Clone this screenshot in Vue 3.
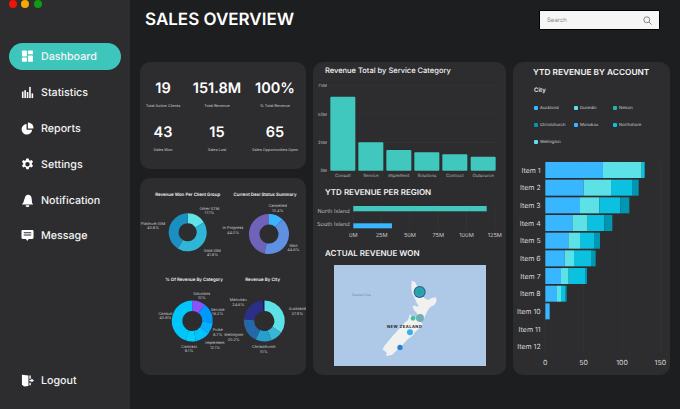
<script setup>
const nav = [
  { key: 'dash', label: 'Dashboard', active: true },
  { key: 'stats', label: 'Statistics' },
  { key: 'reports', label: 'Reports' },
  { key: 'settings', label: 'Settings' },
  { key: 'bell', label: 'Notification' },
  { key: 'msg', label: 'Message' }
]
const stats = [
  ['19', 'Total Active Clients'], ['151.8M', 'Total Revenue'], ['100%', '% Total Revenue'],
  ['43', 'Sales Won'], ['15', 'Sales Lost'], ['65', 'Sales Opportunities Open']
]
function arc(cx, cy, r0, r1, a0, a1) {
  const p = (r, a) => {
    const t = ((a - 90) * Math.PI) / 180
    return `${(cx + r * Math.cos(t)).toFixed(2)} ${(cy + r * Math.sin(t)).toFixed(2)}`
  }
  const large = a1 - a0 > 180 ? 1 : 0
  return `M${p(r1, a0)}A${r1} ${r1} 0 ${large} 1 ${p(r1, a1)}L${p(r0, a1)}A${r0} ${r0} 0 ${large} 0 ${p(r0, a0)}Z`
}
function donut(cx, cy, r0, r1, segs) {
  return segs.map(([a0, a1, fill]) => ({ d: arc(cx, cy, r0, r1, a0, a1), fill }))
}
const donuts = [
  ...donut(187.7, 232.3, 9, 19, [[0, 58, '#62e3e6'], [58, 212, '#2fb6d6'], [212, 360, '#1b8fc2']]),
  ...donut(269, 234, 9.5, 20, [[0, 42, '#38b6ff'], [42, 194, '#5f90e2'], [194, 360, '#6f62b9']]),
  ...donut(192.3, 321, 10, 20.5, [[0, 38, '#8c52ff'], [38, 95, '#0097ff'], [95, 127, '#06b0ff'], [127, 170, '#00c2ff'], [170, 200, '#00d0ff'], [200, 360, '#00c6fb']]),
  ...donut(264.3, 321, 10, 20.5, [[0, 125, '#5ce1e6'], [125, 160, '#38b6d8'], [160, 205, '#259fcc'], [205, 275, '#2468a8'], [275, 355, '#2b2f86'], [355, 360, '#1c1a5e']])
]
const z = (x, y) => [135 + x / 3, 175 + y / 3]
const dTitles = [
  [158, 59, 'Revenue Won Per Client Group'], [390, 59, 'Current Deal Status Summary'],
  [177, 313, '% Of Revenue By Category'], [383, 313, 'Revenue By City']
].map(([x, y, t]) => ({ p: z(x, y), t }))
const dLabels = [
  [223, 100, 'Other STM'], [223, 113, '17.1%'], [54, 144, 'Platinum IGM'], [54, 157, '40.8%'],
  [232, 225, 'Gold IGM'], [232, 238, '41.8%'], [428, 91, 'Cancelled'], [428, 105, '10.4%'],
  [294, 158, 'In Progress'], [294, 171, '44.0%'], [475, 210, 'Won'], [475, 224, '44.6%'],
  [200, 355, 'Solutions'], [200, 368, '10%'], [248, 402, 'Service'], [248, 416, '16.2%'],
  [248, 464, 'Pulse'], [248, 478, '8.7%'], [240, 502, 'Implement'], [240, 516, '12.1%'],
  [162, 513, 'Contract'], [162, 527, '8.1%'], [91, 414, 'Consult'], [91, 428, '40.8%'],
  [310, 373, 'Manukau'], [310, 387, '24.6%'], [487, 401, 'Auckland'], [487, 415, '37.9%'],
  [296, 478, 'Wellington'], [296, 492, '20.2%'], [386, 514, 'Christchurch'], [386, 528, '10%']
].map(([x, y, t]) => ({ p: z(x, y), t }))

const svc = [['Consult', 125, 61], ['Service', 262, 145], ['Implement', 285, 229], ['Solutions', 292, 313], ['Contract', 298, 397], ['Outsource', 305, 482]]
  .map(([t, top, x]) => ({ t, x: 310 + x / 3, y: 55 + top / 3, h: (347 - top) / 3 }))
const svcGrid = [['75M', 85.7], ['50M', 114], ['25M', 142.3], ['0M', 170.7]]
const regTicks = ['0M', '25M', '50M', '75M', '100M', '125M'].map((t, i) => ({ t, x: 353.3 + i * 28.3 }))

const legend = [
  ['Auckland', '#38b6ff'], ['Dunedin', '#5ce1e6'], ['Nelson', '#1fb8a8'],
  ['Christchurch', '#0097b2'], ['Manukau', '#38b6ff'], ['Northshore', '#0cc0df'], ['Wellington', '#5ce1e6']
]
const colors = ['#38b6ff', '#5ce1e6', '#0cc0df', '#0097b2']
const accounts = [
  ['Item 1', [279, 395, 404]], ['Item 2', [221, 303, 366, 386]], ['Item 3', [210, 268, 331, 358]],
  ['Item 4', [187, 233, 283, 307]], ['Item 5', [175, 210, 252, 270]], ['Item 6', [164, 192, 243, 257]],
  ['Item 7', [153, 176, 225, 231]], ['Item 8', [141, 153, 167, 170]], ['Item 10', [119]], ['Item 11', []], ['Item 12', []]
].map(([t, ends], i) => {
  const y = 163 + i * 17.67
  let prev = 106
  const segs = ends.map((e, k) => {
    const s = { x: 510 + prev / 3, w: (e - prev) / 3, fill: colors[k] }
    prev = e
    return s
  })
  return { t, y, segs }
})
const accTicks = [0, 50, 100, 150].map(v => ({ v, x: 510 + (106 + v * 2.3) / 3 }))
</script>

<template>
  <div class="app">
    <aside class="side">
      <div class="lights"><i class="red"></i><i class="amber"></i><i class="green"></i></div>
      <nav class="nav">
        <a v-for="n in nav" :key="n.key" class="item" :class="{ on: n.active }">
          <svg class="ico" viewBox="0 0 14 14" fill="#fff">
            <template v-if="n.key === 'dash'">
              <rect x="1" y="0.5" width="5.4" height="6.4" rx=".8" /><rect x="1" y="8" width="5.4" height="4.6" rx=".8" />
              <rect x="7.5" y="0.5" width="5.4" height="4.2" rx=".8" /><rect x="7.5" y="5.8" width="5.4" height="6.8" rx=".8" />
            </template>
            <template v-else-if="n.key === 'stats'">
              <rect x="1" y="6" width="1.7" height="7" /><rect x="3.6" y="4.5" width="1.7" height="8.5" />
              <rect x="6.2" y="6.5" width="1.7" height="6.5" /><rect x="8.8" y="1" width="1.7" height="12" />
              <rect x="11.4" y="8" width="1.7" height="5" />
            </template>
            <template v-else-if="n.key === 'reports'">
              <path d="M6 2.2A5.7 5.7 0 1 0 12 8.4H6Z" /><path d="M7.4.6A5.8 5.8 0 0 1 13.4 7H7.4Z" />
            </template>
            <template v-else-if="n.key === 'settings'">
              <path fill-rule="evenodd" d="M5.7.5h2.6l.4 1.8 1.2.6 1.7-.8 1.4 2.2-1.3 1.2v1.4l1.3 1.2-1.4 2.2-1.7-.8-1.2.6-.4 1.9H5.7l-.4-1.9-1.2-.6-1.7.8L1 8.1l1.3-1.2V5.5L1 4.3l1.4-2.2 1.7.8 1.2-.6ZM7 4.3a2.4 2.4 0 1 0 0 4.8 2.4 2.4 0 0 0 0-4.8Z" />
            </template>
            <template v-else-if="n.key === 'bell'">
              <path d="M8 .8c2.3.3 3.4 2 3.5 4.2l.4 4.4 1.1 1.8H1l1.5-2 1.4-4.4C4.5 2.5 5.8.5 8 .8Z" /><path d="M5 12.1h4a2 2 0 0 1-4 0Z" />
            </template>
            <template v-else-if="n.key === 'msg'">
              <path fill-rule="evenodd" d="M1.8 1h10.4c.7 0 1.3.6 1.3 1.3v7.2c0 .7-.6 1.3-1.3 1.3H8.4L6.6 13 5.4 10.8H1.8c-.7 0-1.3-.6-1.3-1.3V2.300c0-.7.6-1.300 1.300-1.300ZM3 3.600v1h8v-1Zm0 2.400v1h8V6Z" />
            </template>
          </svg>
          <span>{{ n.label }}</span>
        </a>
      </nav>
      <a class="item logout">
        <svg class="ico" viewBox="0 0 14 14" fill="#fff">
          <path d="M1 .8 8 1.500V13L3.500 13.400 1 11.500Z" /><path d="M9 1.500h1.500V5H9ZM9 9.500h1.500V12H9Z" /><path d="M9 6.200h2.200V4.800L14 7l-2.800 2.200V7.800H9Z" />
        </svg>
        <span>Logout</span>
      </a>
    </aside>

    <main class="main">
      <header class="top">
        <h1>SALES OVERVIEW</h1>
        <label class="search">
          <span>Search</span>
          <svg width="9" height="9" viewBox="0 0 10 10" fill="none" stroke="#777" stroke-width="1"><circle cx="4.200" cy="4.200" r="3.300" /><path d="M6.700 6.700 9.500 9.500" /></svg>
        </label>
      </header>

      <div class="cols">
        <div class="col-left">
          <section class="card stat-card">
            <div v-for="s in stats" :key="s[1]" class="stat">
              <b>{{ s[0] }}</b>
              <small>{{ s[1] }}</small>
            </div>
          </section>
          <section class="card donut-card">
            <svg class="fill" viewBox="140 178 166 197">
              <path v-for="(s, i) in donuts" :key="i" :d="s.d" :fill="s.fill" />
              <text v-for="t in dTitles" :key="t.t" :x="t.p[0]" :y="t.p[1] + 1.800" text-anchor="middle" class="d-title">{{ t.t }}</text>
              <text v-for="(t, i) in dLabels" :key="i" :x="t.p[0]" :y="t.p[1] + 1.500" text-anchor="middle" class="d-label">{{ t.t }}</text>
            </svg>
          </section>
        </div>

        <section class="card mid-card">
          <h2 class="soft">Revenue Total by Service Category</h2>
          <svg class="svc" viewBox="313 77 193 105">
            <g v-for="g in svcGrid" :key="g[0]">
              <line x1="328" x2="496" :y1="g[1]" :y2="g[1]" stroke="#3a3a3c" stroke-width=".5" />
              <text x="327" :y="g[1] + 1.700" text-anchor="end" class="tick">{{ g[0] }}</text>
            </g>
            <g v-for="b in svc" :key="b.t">
              <rect :x="b.x" :y="b.y" width="25" :height="b.h" rx="1" fill="#40c8bf" />
              <text :x="b.x + 12.500" y="177" text-anchor="middle" class="tick">{{ b.t }}</text>
            </g>
          </svg>
          <h2 class="second">YTD REVENUE PER REGION</h2>
          <svg class="reg" viewBox="313 200 193 40">
            <line v-for="t in regTicks" :key="t.t" :x1="t.x" :x2="t.x" y1="204" y2="230" stroke="#3a3a3c" stroke-width=".5" />
            <rect x="353.300" y="206" width="133.400" height="5.300" fill="#40c8bf" />
            <rect x="353.300" y="223.300" width="38.700" height="5" fill="#38b6ff" />
            <text x="349.700" y="213" text-anchor="end" class="reg-l">North Island</text>
            <text x="349.700" y="226" text-anchor="end" class="reg-l">South Island</text>
            <text v-for="t in regTicks" :key="t.t + 'l'" :x="t.x" y="236.500" text-anchor="middle" class="reg-t">{{ t.t }}</text>
          </svg>
          <h2 class="third">ACTUAL REVENUE WON</h2>
          <svg class="map" viewBox="72 76 457 304" preserveAspectRatio="none">
            <rect x="72" y="76" width="457" height="304" fill="#aec8e8" />
            <path fill="#f1f1ef" d="M305 123l10 4 6 12 8 8 8 14 6 14 10 6 14-6 11-2 2 10-6 12-12 6-8 10-6 12-6 14-10 8-12-2-4-8 6-8-2-8-8-8-4-10 4-4 10 4 4-2-6-10-6-14-8-16-2-16Z" />
            <path fill="#f1f1ef" d="M300 224l6 6 10 8 16 8 6 8-8 10-14 12-8 12-14 10-8 8-12 14-14 12-14 14-10 1-10-12-8-6 6-12 12-14 14-16 12-14 12-12 10-12 10-8Z" />
            <circle cx="232" cy="345" r="4" fill="#f1f1ef" />
            <text x="153" y="170" text-anchor="middle" class="sea">Tasman Sea</text>
            <circle cx="329" cy="157" r="18" fill="#2a5b8c" />
            <circle cx="329" cy="157" r="15" fill="#27a5b5" />
            <circle cx="329" cy="157" r="5" fill="#3d9a80" />
            <circle cx="330" cy="235" r="12" fill="#6fb0b0" />
            <circle cx="309" cy="236" r="7" fill="#3dc49f" />
            <circle cx="300" cy="278" r="9" fill="#38b0f0" />
            <circle cx="270" cy="323" r="8" fill="#2a7fd0" />
            <text x="284" y="266" text-anchor="middle" class="nz">NEW ZEALAND</text>
          </svg>
        </section>

        <section class="card right-card">
          <h2 class="acc">YTD REVENUE BY ACCOUNT</h2>
          <h3>City</h3>
          <ul class="legend">
            <li v-for="l in legend" :key="l[0]"><i :style="{ background: l[1] }"></i>{{ l[0] }}</li>
          </ul>
          <svg class="acc-chart" viewBox="513 158 157 217">
            <line v-for="t in accTicks" :key="t.v" :x1="t.x" :x2="t.x" y1="162" y2="354" stroke="#3a3a3c" stroke-width=".5" />
            <g v-for="r in accounts" :key="r.t">
              <rect v-for="(s, i) in r.segs" :key="i" :x="s.x" :y="r.y" :width="s.w" height="16" :fill="s.fill" />
              <text x="540.700" :y="r.y + 10.500" text-anchor="end" class="acc-l">{{ r.t }}</text>
            </g>
            <text v-for="t in accTicks" :key="t.v + 'l'" :x="t.x" y="366" text-anchor="middle" class="acc-l">{{ t.v }}</text>
          </svg>
        </section>
      </div>
    </main>
  </div>
</template>

<style>
html, body { margin: 0; background: #1d1e20; }
</style>

<style scoped>
.app {
  width: 680px; height: 409px; overflow: hidden; display: flex;
  background: #1d1e20; color: #fff;
  font-family: Inter, "Noto Sans", "Liberation Sans", sans-serif;
  text-rendering: geometricPrecision;
}
.side {
  width: 130px; flex: none; box-sizing: border-box; background: #2d2d2f;
  display: flex; flex-direction: column; padding: 0 9px 15px 8.500px;
}
.lights { display: flex; gap: 4.600px; height: 43px; }
.lights i { width: 8px; height: 8px; border-radius: 50%; }
.red { background: #f01408; }
.amber { background: #f7a800; }
.green { background: #0d9c12; }
.nav { display: flex; flex-direction: column; gap: 8.900px; }
.item {
  height: 27px; display: flex; align-items: center; gap: 7px; padding-left: 12.500px;
  font-size: 10.700px; font-weight: 500; border-radius: 14px; color: #f4f4f4;
}
.item.on { background: #3fc6bc; }
.ico { width: 13px; height: 13px; flex: none; }
.logout { margin-top: auto; }
.main { flex: 1; min-width: 0; padding: 0 10px; box-sizing: border-box; }
.top { height: 62px; display: flex; justify-content: space-between; padding: 10px 10px 0 5px; box-sizing: border-box; }
.top h1 { margin: 0; font-size: 17px; font-weight: 600; line-height: 21px; }
.search {
  width: 121px; height: 20px; box-sizing: border-box; background: #f6f6f6; border: 1.500px solid #000;
  border-radius: 1px; display: flex; align-items: center; justify-content: space-between;
  padding: 0 7px; font-size: 6px; color: #8a8a8a;
}
.cols { display: flex; gap: 7px; height: 313px; }
.card { background: #2d2d2f; border-radius: 10px; box-sizing: border-box; }
.col-left { width: 166px; display: flex; flex-direction: column; gap: 9px; }
.stat-card {
  height: 107px; display: grid; grid-template-columns: 46px 62px 54px; grid-template-rows: 43.500px 43.500px;
  padding: 16px 4px 0 0;
}
.stat { display: flex; flex-direction: column; align-items: center; gap: 4px; }
.stat b { font-size: 14.500px; font-weight: 600; line-height: 21px; }
.stat small { font-size: 3.800px; color: #d0d0d0; white-space: nowrap; }
.donut-card { height: 197px; }
.fill { display: block; width: 166px; height: 197px; }
.d-title { font-size: 4.400px; font-weight: 600; fill: #f2f2f2; }
.d-label { font-size: 3.900px; fill: #c8c8c8; }
.mid-card { width: 193px; padding-top: 3px; }
.mid-card h2, .right-card h2 { margin: 0 0 0 12px; font-size: 8px; font-weight: 600; line-height: 12px; color: #f4f4f4; white-space: nowrap; }
.mid-card h2.soft { font-size: 7.500px; font-weight: 500; }
.mid-card h2.second { margin-top: 4px; margin-bottom: 2px; }
.mid-card h2.third { margin-top: 7px; }
.svc { display: block; width: 193px; height: 105px; }
.reg { display: block; width: 193px; height: 40px; }
.map { display: block; width: 152.300px; height: 101.400px; margin: 6px 0 0 21px; }
.tick { font-size: 4.300px; fill: #b9b9b9; }
.reg-l { font-size: 5.600px; fill: #b9b9b9; }
.reg-t { font-size: 5.600px; fill: #c4c4c4; }
.sea { font-size: 10px; fill: #6d88a8; }
.nz { font-size: 12px; font-weight: 700; letter-spacing: 1.500px; fill: #222; }
.right-card { width: 157px; padding-top: 5px; }
.right-card h2.acc { margin-left: 20px; font-size: 8.300px; }
.right-card h3 { margin: 7px 0 0 21px; font-size: 6px; font-weight: 600; line-height: 9px; color: #e8e8e8; }
.legend {
  list-style: none; margin: 10px 0 0 21px; padding: 0; display: grid;
  grid-template-columns: 40px 39px 40px; grid-auto-rows: 17px; font-size: 4.200px; color: #d4d4d4;
}
.legend li { display: flex; align-items: center; gap: 2.500px; white-space: nowrap; height: 6px; }
.legend i { width: 3.500px; height: 3.500px; border-radius: 1px; flex: none; }
.acc-chart { display: block; width: 157px; height: 217px; margin-top: 1px; }
.acc-l { font-size: 7px; fill: #d6d6d6; }
</style>
